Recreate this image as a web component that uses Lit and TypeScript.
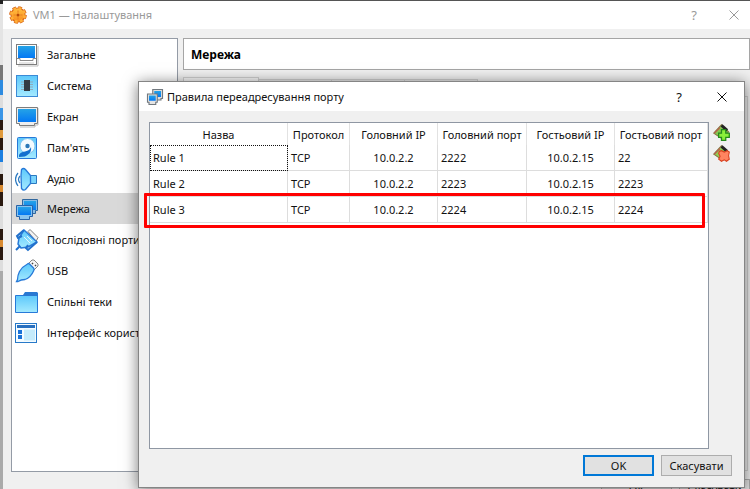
import { LitElement, html, svg, css } from "lit";
import { customElement, property } from "lit/decorators.js";

const defs = svg`<defs>
  <linearGradient id="b" x1="0" y1="0" x2="0" y2="1"><stop offset="0" stop-color="#25a3e6"/><stop offset="1" stop-color="#0478f4"/></linearGradient>
  <linearGradient id="c" x1="0" y1="0" x2="0" y2="1"><stop offset="0" stop-color="#5cc8fb"/><stop offset="1" stop-color="#a5eaff"/></linearGradient>
  <linearGradient id="o" x1="0" y1="0" x2="0" y2="1"><stop offset="0" stop-color="#ffc040"/><stop offset="1" stop-color="#f98a1e"/></linearGradient>
</defs>`;

const icons: Record<string, unknown> = {
  general: svg`<path d="M23 3v20H3" fill="none" stroke="#bbb"/><rect x="1.500" y="1.500" width="20" height="20" fill="#fff" stroke="#7d7d7d"/><rect x="3" y="3" width="17" height="12" fill="url(#b)"/><path d="M2 15.500h3v2h13v-2h3" fill="#fff" stroke="#8a8a8a"/><path d="M4 20h15" stroke="#ccc"/>`,
  system: svg`<rect x="1.500" y="1.500" width="21" height="21" fill="url(#c)" stroke="#3b8ad6"/><path d="M6 8h12M6 10.500h12M6 13h12M6 15.500h12" stroke="#8fa9b8"/><rect x="9" y="6" width="6" height="11" fill="#333a44"/>`,
  display: svg`<path d="M23 3v17h-3v2H5" fill="none" stroke="#bbb"/><path d="M1.500 2.500h21v16h-3v2h-15v-2h-3z" fill="#eee" stroke="#7d7d7d"/><rect x="3" y="4" width="18" height="13" fill="url(#b)"/>`,
  storage: svg`<rect x="2.500" y="1.500" width="19" height="21" rx="1" fill="url(#c)" stroke="#2779d8"/><circle cx="12.500" cy="10" r="7.500" fill="#f4fbff" stroke="#7fc4ee"/><circle cx="12.500" cy="10" r="2.200" fill="#2c78b8"/><path d="M4 19q1-3 6-3.500 5-1 6-4.500 1 5-3 7.500-2 2.500-9 2.500z" fill="#1470cf"/>`,
  audio: svg`<path d="M15 8.500h6.500v8H15z" fill="#7bd4fc" stroke="#2b79c0"/><path d="M6 8.500L6.500 2.500q2-2 4 0l5 6v8l-5 6q-2 1.500-4-1z" fill="url(#c)" stroke="#2779d8" stroke-width="1.300"/><path d="M3 6q-5 6 0 13M5 9q-3 3.500 0 7" fill="none" stroke="#2b79c0" stroke-width="1.200"/>`,
  network: svg`<path d="M7.500 2.500h15v11h-2v3h-11v-3h-2z" fill="#87bde6" stroke="#31679d"/><rect x="9" y="4" width="12" height="9" fill="url(#b)"/><path d="M1.500 8.500h16v11h-3v3h-10v-3h-3z" fill="#87c3ef" stroke="#2763a8"/><rect x="3" y="10" width="13" height="8" fill="url(#b)"/>`,
  serial: svg`<path d="M13 3.500l2-2 8 8-2 4z" fill="#f2f2f2" stroke="#808080"/><path d="M9 2l13 12-9 5-7 1-3-4 1-6z" fill="url(#c)" stroke="#2779d8" stroke-width="1.500" stroke-linejoin="round"/><path d="M12 8l5 5M9 9l6 6" stroke="#e4f8ff"/><path d="M9 2L2 8l1 2 4-2M22 14l-9 8-2-2 2-3M5 18l-4 4" fill="none" stroke="#2171cc" stroke-width="2"/>`,
  usb: svg`<path d="M13 5l4-4 2 0 4 4v2l-4 4z" fill="#f5f5f5" stroke="#858585"/><path d="M17 4l1 1M20 6l1 1" stroke="#444" stroke-width="1.500"/><path d="M12.500 5q1-1 2 0l4 4q1 1 .3 2.500-3 7-8.800 9-4 0-7 2H1.500l1-2q0-4 2-8 3-5 8-7.500z" fill="url(#c)" stroke="#2779d8" stroke-width="1.300"/>`,
  folder: svg`<path d="M.500 5.500h22v17H.5z" fill="url(#c)" stroke="#2779d8"/><path d="M8 5l2-3h12l1 1v3H8z" fill="#2878d2"/>`,
  ui: svg`<rect x=".500" y="2.500" width="21" height="19" fill="#f4fbff" stroke="#2779c8"/><path d="M2 5.500h18" stroke="#2870c0" stroke-width="3"/><rect x="9" y="8.500" width="11" height="11" fill="#c5ebfb"/><path d="M3 9h4v4H3zM3 14h4v4H3z" fill="#1971d8"/>`,
  gear: svg`<circle cx="12" cy="12" r="9.500" fill="none" stroke="#d96a1c" stroke-width="4.500" stroke-dasharray="4.800 2.660"/><circle cx="12" cy="12" r="9.400" fill="url(#o)" stroke="#dc6c1c" stroke-width="1.500"/><circle cx="12" cy="12" r="9" fill="none" stroke="#ffb03a" stroke-width="3.500" stroke-dasharray="3.700 3.369" stroke-dashoffset="-.5"/><circle cx="12" cy="12" r="2" fill="#b84a08"/><path d="M12 6v3M12 15v3M6 12h3M15 12h3" stroke="#e88020" stroke-width="1.500"/>`,
  monitors: svg`<path d="M9 2h13v12h-2v2H9z" fill="#ddd" stroke="#71787e" stroke-width="1.500"/><path d="M11 4h9v8h-9z" fill="url(#b)"/><path d="M2 8h13v11h-2v3H4v-3H2z" fill="#e5e5e5" stroke="#71787e" stroke-width="1.500"/><path d="M4 10h9v7H4z" fill="url(#b)"/>`,
  add: svg`<path d="M1 13L12 1l10 10-9 10z" fill="#87c552" stroke="#867343" stroke-width="1.500"/><path d="M12 2l8 7" stroke="#222" stroke-width="4"/><path d="M2 13l8-8" stroke="#c2574b" stroke-width="1.500"/><path d="M12 8h6v5h5v6h-5v4h-6v-4H8v-6h4z" fill="#8af03a" stroke="#258b1c" stroke-width="1.800"/>`,
  remove: svg`<path d="M1 13L12 1l10 10-9 10z" fill="#91cd55" stroke="#867343" stroke-width="1.500"/><path d="M12 2l8 7" stroke="#222" stroke-width="4"/><path d="M2 13l8-8" stroke="#c2574b" stroke-width="1.500"/><path d="M9 9l3-1 4 2 4-2 3 2-1 5 1 5-4 3-3-2-4 2-4-3 2-4-2-4z" fill="#ff8460" stroke="#d9401f" stroke-width="1.500"/>`,
  close: svg`<path d="M3 3l18 18M21 3L3 21" stroke="currentColor" stroke-width="2" fill="none"/>`,
};

@customElement("ui-icon")
class UiIcon extends LitElement {
  @property() name = "";
  static styles = css`:host{display:inline-flex;width:24px;height:24px;flex:none} svg{width:100%;height:100%}`;
  render() { return html`<svg viewBox="0 0 24 24" aria-hidden="true">${defs}${icons[this.name]}</svg>`; }
}

const pages = [
  ["general", "Загальне"], ["system", "Система"], ["display", "Екран"], ["storage", "Пам'ять"], ["audio", "Аудіо"],
  ["network", "Мережа"], ["serial", "Послідовні порти"], ["usb", "USB"], ["folder", "Спільні теки"], ["ui", "Інтерфейс користувача"],
];
const columns = ["Назва", "Протокол", "Головний IP", "Головний порт", "Гостьовий IP", "Гостьовий порт"];
const rules = [
  ["Rule 1", "TCP", "10.0.2.2", "2222", "10.0.2.15", "22"],
  ["Rule 2", "TCP", "10.0.2.2", "2223", "10.0.2.15", "2223"],
  ["Rule 3", "TCP", "10.0.2.2", "2224", "10.0.2.15", "2224"],
];

@customElement("app-root")
class AppRoot extends LitElement {
  static styles = css`
    :host{display:flex;position:relative;height:100vh;overflow:hidden;font:11px/16px "Noto Sans","Open Sans",sans-serif;color:#111}
    *{box-sizing:border-box}
    button{font:inherit;color:inherit;padding:0;border:0;background:none}
    .desktop{width:3px;flex:none;background:linear-gradient(#222 0 4px,#e4e4e4 4px 65px,#777 65px 80px,#2d8be0 80px 95px,#ddd 95px 108px,#3a95e6 108px 120px,#2b1a10 120px 130px,#e09a3c 130px 138px,#2b1a10 138px 150px,#1c7fe0 150px 162px,#ddd 162px 174px,#2b1a10 174px 185px,#d88a30 185px 192px,#2b1a10 192px 206px,#ddd 206px 229px,#2b1a10 229px 240px,#d88a30 240px 247px,#2b1a10 247px 260px,#ddd 260px 271px,#aaa 271px)}
    .settings{flex:1;min-width:0;border-top:1px solid #555;background:#f0f0f0;display:flex;flex-direction:column}
    .bar{display:flex;align-items:center;background:#fff;flex:none}
    .settings>.bar{height:28px;padding:0 4px 0 6px;gap:6px;color:#999}
    .bar h1{flex:1;margin:0;font:inherit}
    .bar button{width:24px;height:24px;display:grid;place-items:center;font-size:13px}
    .bar button ui-icon{width:12px;height:12px}
    .orb{width:18px;height:18px}
    .controls{display:flex;gap:19px}
    .settings .controls{gap:16px}
    .content{flex:1;display:flex;gap:5px;padding:9px 0 0 8px;min-height:0}
    .nav{width:167px;flex:none;margin-bottom:17px;background:#fff;border:1px solid #949ba6}
    .nav ul{list-style:none;margin:0;padding:0;display:grid;grid-template-rows:repeat(10,1fr);height:308px}
    .nav li{display:flex}
    .nav button{flex:1;display:flex;align-items:center;gap:8px;padding:2px 0 0 3px;white-space:nowrap;text-align:left;overflow:hidden}
    .nav .on{background:#d9d9d9}
    .page{flex:1;display:flex;flex-direction:column;min-width:0}
    .page h2{margin:0 0 7px;height:32px;padding:0 7px;background:#fff;border:1px solid #a5a5a5;font:bold 12px/32px "Noto Sans",sans-serif;color:#000}
    .tabs{display:flex;align-items:flex-end;height:19px}
    .tabs i{width:73px;height:17px;border:1px solid #d0d0d0;border-left:0;background:#e9e9e9}
    .tabs i:first-child{width:76px;height:19px;background:#f8f8f8;border-left:1px solid #d0d0d0}
    .pane{flex:1;border:1px solid #d0d0d0;margin-right:2px}
    .under{display:flex;justify-content:flex-end;gap:7px;height:18px;padding-top:8px;overflow:hidden}
    .under button{width:71px;height:21px;flex:none;background:#e1e1e1;border:1px solid #adadad;line-height:15px}
    .dialog{position:absolute;left:138px;right:5px;top:81px;bottom:1px;border:1px solid #858585;background:#f0f0f0;display:flex;flex-direction:column;box-shadow:0 2px 14px #0008}
    .dialog>.bar{height:29px;padding:0 10px 0 7px;gap:3px}
    .body{flex:1;display:flex;gap:4px;padding:11px 14px 6px 10px;min-height:0}
    .grid{flex:1;background:#fff;border:1px solid #8f97a3}
    .side{display:flex;flex-direction:column;gap:4px;padding-top:2px}
    .side button{display:flex}
    .side ui-icon{width:17px;height:17px}
    table{width:100%;border-collapse:separate;border-spacing:0;table-layout:fixed}
    th{height:22px;padding:2px 0 0;font-weight:400;border-right:1px solid #e2e2e2;white-space:nowrap;text-align:center}
    td{height:26px;padding:0 3px;border-right:1px solid #ddd;border-bottom:1px solid #ddd}
    td.mid{text-align:center}
    td.focus{outline:1px dotted #111;outline-offset:-1px}
    .w0{width:138px}.w1{width:62px}.w2,.w4{width:88px}.w3{width:89px}
    .actions{display:flex;justify-content:flex-end;gap:7px;padding:0 12px 11px}
    .actions button{width:71px;height:21px;background:#e1e1e1;border:1px solid #adadad}
    .actions .primary{border:2px solid #0078d7}
    .mark{position:absolute;left:144px;right:45px;top:193px;height:35px;border:3px solid #f00;border-radius:1px;pointer-events:none}
  `;
  render() {
    return html`
      <div class="desktop"></div>
      <main class="settings">
        <header class="bar"><ui-icon class="orb" name="gear"></ui-icon><h1>VM1 — Налаштування</h1>
          <div class="controls"><button aria-label="Довідка">?</button><button aria-label="Закрити"><ui-icon name="close"></ui-icon></button></div></header>
        <div class="content">
          <nav class="nav"><ul>${pages.map(([icon, label]) => html`<li><button class=${icon === "network" ? "on" : ""}><ui-icon name=${icon}></ui-icon>${label}</button></li>`)}</ul></nav>
          <section class="page"><h2>Мережа</h2><div class="tabs"><i></i><i></i><i></i><i></i></div><div class="pane"></div>
            <footer class="under"><button>OK</button><button>Скасувати</button></footer></section>
        </div>
      </main>
      <section class="dialog" role="dialog" aria-labelledby="title">
        <header class="bar"><ui-icon class="orb" name="monitors"></ui-icon><h1 id="title">Правила переадресування порту</h1>
          <div class="controls"><button aria-label="Довідка">?</button><button aria-label="Закрити"><ui-icon name="close"></ui-icon></button></div></header>
        <div class="body">
          <div class="grid"><table>
            <thead><tr>${columns.map((c, i) => html`<th class="w${i}">${c}</th>`)}</tr></thead>
            <tbody>${rules.map((r, y) => html`<tr>${r.map((v, x) => html`<td class="${x === 2 || x === 4 ? "mid" : ""} ${x + y === 0 ? "focus" : ""}">${v}</td>`)}</tr>`)}</tbody>
          </table></div>
          <div class="side"><button aria-label="Додати правило"><ui-icon name="add"></ui-icon></button><button aria-label="Вилучити правило"><ui-icon name="remove"></ui-icon></button></div>
        </div>
        <footer class="actions"><button class="primary">OK</button><button>Скасувати</button></footer>
      </section>
      <div class="mark"></div>`;
  }
}
